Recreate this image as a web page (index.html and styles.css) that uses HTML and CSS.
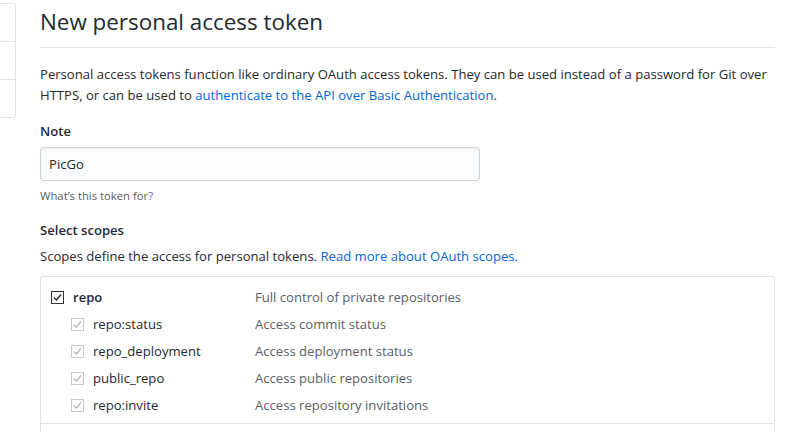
FILE: index.html
```html
<!DOCTYPE html>
<html lang="en">
<head>
<meta charset="utf-8">
<title>New personal access token</title>
<link rel="stylesheet" href="styles.css">
</head>
<body>
<div class="layout">
  <aside class="sidebar">
    <div class="menu">
      <div class="menu-item"></div>
      <div class="menu-item"></div>
      <div class="menu-item"></div>
    </div>
  </aside>
  <main class="main">
    <h1 class="title">New personal access token</h1>
    <p class="lead">Personal access tokens function like ordinary OAuth access tokens. They can be used instead of a password for Git over HTTPS, or can be used to <a href="#">authenticate to the API over Basic Authentication</a>.</p>

    <div class="field">
      <label class="field-label" for="note">Note</label>
      <input class="input" id="note" type="text" value="PicGo">
      <p class="note">What’s this token for?</p>
    </div>

    <div class="field">
      <div class="field-label">Select scopes</div>
      <p class="scopes-desc">Scopes define the access for personal tokens. <a href="#">Read more about OAuth scopes.</a></p>
      <div class="scopes">
        <div class="group">
          <div class="row">
            <span class="label main-label"><span class="cb"><svg viewBox="0 0 13 13" width="13" height="13"><path d="M3 6.5 L5.5 9 L10 3.5" fill="none" stroke="#222" stroke-width="1.2"/></svg></span><span class="name strong">repo</span></span>
            <span class="desc">Full control of private repositories</span>
          </div>
          <div class="row sub">
            <span class="label"><span class="cb off"><svg viewBox="0 0 13 13" width="13" height="13"><path d="M3 6.5 L5.5 9 L10 3.5" fill="none" stroke="#b5b5b5" stroke-width="1.2"/></svg></span><span class="name">repo:status</span></span>
            <span class="desc">Access commit status</span>
          </div>
          <div class="row sub">
            <span class="label"><span class="cb off"><svg viewBox="0 0 13 13" width="13" height="13"><path d="M3 6.5 L5.5 9 L10 3.5" fill="none" stroke="#b5b5b5" stroke-width="1.2"/></svg></span><span class="name">repo_deployment</span></span>
            <span class="desc">Access deployment status</span>
          </div>
          <div class="row sub">
            <span class="label"><span class="cb off"><svg viewBox="0 0 13 13" width="13" height="13"><path d="M3 6.5 L5.5 9 L10 3.5" fill="none" stroke="#b5b5b5" stroke-width="1.2"/></svg></span><span class="name">public_repo</span></span>
            <span class="desc">Access public repositories</span>
          </div>
          <div class="row sub">
            <span class="label"><span class="cb off"><svg viewBox="0 0 13 13" width="13" height="13"><path d="M3 6.5 L5.5 9 L10 3.5" fill="none" stroke="#b5b5b5" stroke-width="1.2"/></svg></span><span class="name">repo:invite</span></span>
            <span class="desc">Access repository invitations</span>
          </div>
        </div>
        <div class="group next"></div>
      </div>
    </div>
  </main>
</div>
</body>
</html>
```

FILE: styles.css
```css
html, body {
  margin: 0;
  padding: 0;
  background: #fff;
}
body {
  font-family: "Open Sans", "Noto Sans", "Liberation Sans", sans-serif;
  font-size: 13.1px;
  line-height: 21px;
  color: #24292e;
  overflow: hidden;
  height: 432px;
}
a {
  color: #0366d6;
  text-decoration: none;
}
.layout {
  display: flex;
  gap: 24px;
}
.sidebar {
  width: 16px;
  flex: none;
  padding-top: 3px;
}
.menu {
  border: 1px solid #e1e4e8;
  border-left: none;
  border-radius: 0 3px 3px 0;
}
.menu-item {
  height: 37px;
  border-top: 1px solid #e1e4e8;
}
.menu-item:first-child {
  border-top: none;
}
.main {
  width: 735px;
  flex: none;
}
.title {
  margin: 0;
  padding: 4px 0 7px;
  font-size: 22.4px;
  font-weight: 400;
  line-height: 36px;
  border-bottom: 1px solid #e1e4e8;
}
.lead {
  margin: 16px 0 15px;
}
.field {
  margin-bottom: 15px;
}
.field-label {
  display: block;
  font-weight: 600;
  margin-bottom: 5px;
}
.input {
  display: block;
  box-sizing: border-box;
  width: 440px;
  height: 34px;
  padding: 6px 8px;
  font: inherit;
  color: #24292e;
  background: #fafbfc;
  border: 1px solid #d1d5da;
  border-radius: 3px;
  box-shadow: inset 0 1px 2px rgba(27, 31, 35, 0.075);
}
.note {
  margin: 6px 0 0;
  font-size: 11.3px;
  line-height: 18px;
  color: #586069;
}
.field .field-label + .scopes-desc {
  margin-top: 4px;
}
.scopes-desc {
  margin: 0 0 9px;
}
.scopes {
  border: 1px solid #e1e4e8;
  border-bottom: none;
  border-radius: 3px 3px 0 0;
}
.group {
  padding: 7px 10px 4px;
}
.group.next {
  border-top: 1px solid #e1e4e8;
  height: 20px;
}
.row {
  display: grid;
  grid-template-columns: 204px 1fr;
  height: 27px;
  align-items: center;
}
.row.sub {
  grid-template-columns: 184px 1fr;
  padding-left: 20px;
}
.label {
  display: flex;
  align-items: center;
  gap: 9px;
}
.cb {
  width: 13px;
  height: 13px;
  box-sizing: border-box;
  border: 1px solid #333;
  display: flex;
  align-items: center;
  justify-content: center;
}
.cb svg {
  display: block;
  flex: none;
}
.cb.off {
  border-color: #c8c8c8;
}
.strong {
  font-weight: 600;
}
.desc {
  color: #586069;
}
```
